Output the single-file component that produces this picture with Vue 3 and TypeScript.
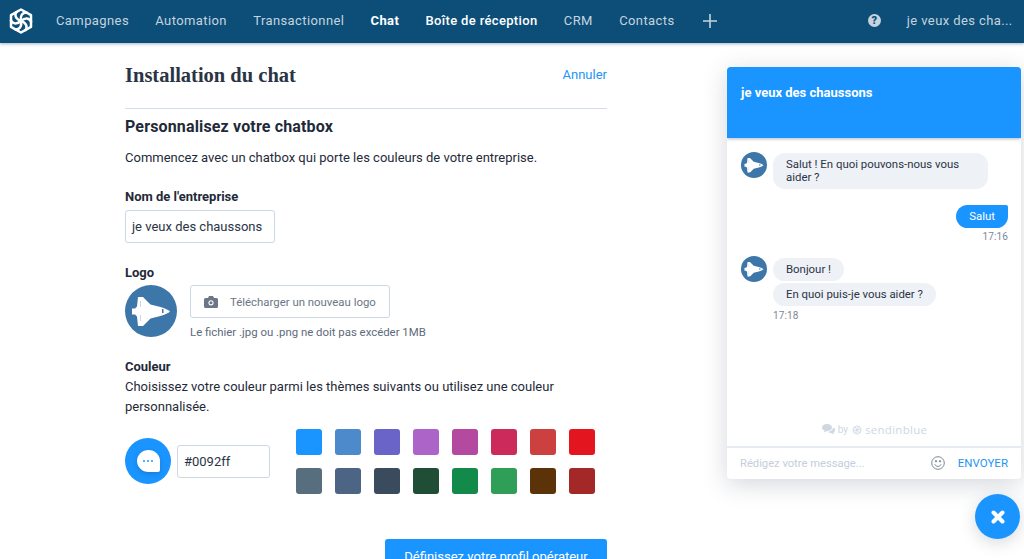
<script setup lang="ts">
const navItems: { label: string; cls: string }[] = [
  { label: 'Campagnes', cls: '' },
  { label: 'Automation', cls: '' },
  { label: 'Transactionnel', cls: '' },
  { label: 'Chat', cls: 'active' },
  { label: 'Boîte de réception', cls: 'bright' },
  { label: 'CRM', cls: '' },
  { label: 'Contacts', cls: '' },
]
const swatches: string[] = [
  '#1a94ff', '#4d8acb', '#6a64c8', '#ad64c8', '#b34a9f', '#cc2a5a', '#cc4040', '#e3161f',
  '#566e7e', '#4c6584', '#3a4b5e', '#1f4d36', '#148a4a', '#2f9e56', '#5c3208', '#a52829',
]
const arms: number[] = [0, 60, 120, 180, 240, 300]
</script>

<template>
  <div class="page">
    <svg class="defs" width="0" height="0" aria-hidden="true">
      <symbol id="shuttle" viewBox="0 0 52 52">
        <circle cx="26" cy="26" r="26" fill="#3d76a8" />
        <path fill="#fff" d="M7 23.500h3l2-2 1-9.500h5l7.500 7.500 10 2.500c4.500 1.200 8 3 9.500 4.500-1.500 1.500-5 3.300-9.500 4.500l-10 2.500-7.500 7.500h-5l-1-9.500-2-2H7z" />
        <path fill="#3d76a8" d="M37 24h1.500v4H37z" />
        <path fill="#3d76a8" opacity=".35" d="M15 16h.8v6H15zM15 30h.8v6H15z" />
      </symbol>
    </svg>

    <header class="nav">
      <svg class="brand" width="28" height="28" viewBox="0 0 28 28" fill="none" stroke="#fff" stroke-width="2.500" stroke-linejoin="round" stroke-linecap="round">
        <path d="M14 2.500l10 5.700v11.600l-10 5.700-10-5.700V8.200z" />
        <path v-for="a in arms" :key="a" d="M14 14C13 9 15 5.500 19.500 5.500" :transform="`rotate(${a} 14 14)`" />
      </svg>
      <nav class="links">
        <span v-for="item in navItems" :key="item.label" class="link" :class="item.cls">{{ item.label }}</span>
        <svg class="plus" width="14" height="14" viewBox="0 0 14 14" stroke="#c4d3df" stroke-width="1.600"><path d="M7 0v14M0 7h14" /></svg>
      </nav>
      <div class="account">
        <span class="help">?</span>
        <span class="link">je veux des cha...</span>
      </div>
    </header>

    <main class="form">
      <div class="title-row">
        <h1>Installation du chat</h1>
        <a class="cancel">Annuler</a>
      </div>
      <h2>Personnalisez votre chatbox</h2>
      <p class="intro">Commencez avec un chatbox qui porte les couleurs de votre entreprise.</p>

      <label class="label">Nom de l'entreprise</label>
      <div class="field name-field">je veux des chaussons</div>

      <label class="label logo-label">Logo</label>
      <div class="logo-row">
        <svg class="logo" width="52" height="52"><use href="#shuttle" /></svg>
        <div>
          <div class="upload">
            <svg width="14" height="12" viewBox="0 0 14 12"><path fill="#6b7686" d="M1.500 2H4l1-2h4l1 2h2.500A1.500 1.500 0 0 1 14 3.500v7a1.500 1.500 0 0 1-1.500 1.500h-11A1.500 1.500 0 0 1 0 10.500v-7A1.500 1.500 0 0 1 1.500 2z" /><circle cx="7" cy="6.800" r="2.600" fill="#fff" /><circle cx="7" cy="6.800" r="1.500" fill="#6b7686" /></svg>
            <span>Télécharger un nouveau logo</span>
          </div>
          <p class="hint">Le fichier .jpg ou .png ne doit pas excéder 1MB</p>
        </div>
      </div>

      <label class="label color-label">Couleur</label>
      <p class="color-text">Choisissez votre couleur parmi les thèmes suivants ou utilisez une couleur personnalisée.</p>
      <div class="color-row">
        <div class="preview">
          <span class="bubble"><i></i><i></i><i></i></span>
        </div>
        <div class="field hex-field">#0092ff</div>
        <div class="swatches">
          <span v-for="c in swatches" :key="c" class="swatch" :style="{ background: c }"></span>
        </div>
      </div>
      <div class="actions">
        <button class="primary" type="button">Définissez votre profil opérateur</button>
      </div>
    </main>

    <aside class="chat">
      <div class="chat-head">je veux des chaussons</div>
      <div class="chat-body">
        <div class="msg">
          <svg class="avatar" width="26" height="26"><use href="#shuttle" /></svg>
          <div class="stack">
            <div class="b in wide">Salut ! En quoi pouvons-nous vous aider ?</div>
          </div>
        </div>
        <div class="out-group">
          <div class="b out">Salut</div>
          <div class="time">17:16</div>
        </div>
        <div class="msg second">
          <svg class="avatar" width="26" height="26"><use href="#shuttle" /></svg>
          <div class="stack">
            <div class="b in">Bonjour !</div>
            <div class="b in">En quoi puis-je vous aider ?</div>
            <div class="time">17:18</div>
          </div>
        </div>
        <div class="by">
          <svg width="13" height="11" viewBox="0 0 13 11" fill="#cfd7e3"><path d="M5 0c2.800 0 5 1.500 5 3.500S7.800 7 5 7L2 8.500l.5-2C1 6 0 4.800 0 3.500 0 1.500 2.200 0 5 0z" /><path d="M11 3.500c1.300.6 2 1.500 2 2.700 0 1-.6 1.800-1.500 2.300l.4 1.800L9 9c-1.500 0-2.700-.5-3.400-1.200C8.500 7.800 11 6 11 3.500z" /></svg>
          <span>by</span>
          <svg class="by-logo" width="10" height="10" viewBox="0 0 28 28" fill="none" stroke="#cfd7e3" stroke-width="2.500"><path d="M14 2l10.500 6v12L14 26 3.500 20V8z" /><path v-for="a in arms" :key="a" d="M14 14C13 9 15 5 20 5" :transform="`rotate(${a} 14 14)`" /></svg>
          <span class="brand-name">sendinblue</span>
        </div>
      </div>
      <div class="composer">
        <span class="placeholder">Rédigez votre message...</span>
        <svg width="14" height="14" viewBox="0 0 14 14" fill="none" stroke="#7d8798" stroke-width="1"><circle cx="7" cy="7" r="6.300" /><path d="M3.800 8.300c.7 1.400 1.900 2.100 3.200 2.100s2.500-.7 3.200-2.100" /><circle cx="5" cy="5.300" r=".7" fill="#7d8798" /><circle cx="9" cy="5.300" r=".7" fill="#7d8798" /></svg>
        <span class="send">ENVOYER</span>
      </div>
    </aside>

    <button class="close" type="button" aria-label="Fermer">
      <svg width="14" height="14" viewBox="0 0 14 14" stroke="#fff" stroke-width="4" stroke-linecap="round"><path d="M2.500 2.500l9 9M11.500 2.500l-9 9" /></svg>
    </button>
  </div>
</template>

<style>
html, body { margin: 0; background: #fff; overflow: hidden; }
</style>

<style scoped>
.page {
  position: relative;
  width: 1024px;
  height: 559px;
  overflow: hidden;
  background: #fff;
  color: #1f2a3a;
  font-family: Roboto, "Liberation Sans", sans-serif;
}
.defs { position: absolute; }
.nav {
  height: 43px;
  box-sizing: border-box;
  display: flex;
  align-items: center;
  padding: 0 0 2px 7px;
  background: #0c4e78;
  box-shadow: 0 1px 3px rgba(40, 60, 90, .4);
}
.brand { flex: none; margin-right: 21px; }
.links { display: flex; align-items: center; gap: 26.300px; }
.link { font-size: 13px; letter-spacing: .4px; color: #c4d3df; white-space: nowrap; }
.link.bright { color: #fff; font-weight: 500; letter-spacing: .35px; }
.link.active { color: #fff; font-weight: 700; letter-spacing: .35px; }
.plus { margin-left: 2px; }
.account { display: flex; align-items: center; gap: 26px; margin-left: 151px; }
.help {
  width: 13px; height: 13px; border-radius: 50%;
  background: #c4d3df; color: #0c4e78;
  font-size: 11px; font-weight: 900; line-height: 13px; text-align: center;
}
.form { width: 482px; margin-left: 125px; }
.title-row {
  height: 66px;
  box-sizing: border-box;
  display: flex;
  align-items: flex-start;
  justify-content: space-between;
  padding-top: 19px;
  border-bottom: 1px solid #d5dde8;
}
h1 {
  margin: 0;
  font-family: "Liberation Serif", serif;
  font-size: 20.500px;
  line-height: 26px;
  font-weight: 700;
  color: #2a3445;
}
.cancel { font-size: 13px; line-height: 26px; color: #1f94f5; }
h2 { margin: 8px 0 0; font-size: 16px; line-height: 19px; font-weight: 700; letter-spacing: .15px; color: #1f2a3a; }
.intro { margin: 12px 0 0; font-size: 13px; line-height: 19px; }
.label { display: block; font-size: 13px; line-height: 16px; font-weight: 700; }
.intro + .label { margin-top: 22px; }
.field {
  box-sizing: border-box;
  height: 33px;
  border: 1px solid #ccd6e4;
  border-radius: 3px;
  padding: 0 6px;
  font-size: 13px;
  line-height: 31px;
  white-space: nowrap;
  color: #2a3445;
}
.name-field { width: 150px; margin-top: 5px; }
.logo-label { margin-top: 22px; }
.logo-row { display: flex; gap: 13px; margin-top: 4px; height: 52px; }
.logo { flex: none; }
.upload {
  box-sizing: border-box;
  width: 200px;
  height: 33px;
  border: 1px solid #ccd6e4;
  border-radius: 3px;
  display: flex;
  align-items: center;
  gap: 12px;
  padding-left: 13px;
  font-size: 11.400px;
  white-space: nowrap;
  color: #6b7686;
}
.hint { margin: 7px 0 0; font-size: 11.400px; line-height: 15px; white-space: nowrap; color: #5e6a7b; }
.color-label { margin-top: 22px; }
.color-text { margin: 2px 0 0; font-size: 13px; line-height: 20px; width: 460px; }
.color-row { display: flex; align-items: center; margin-top: 11px; height: 66px; }
.preview {
  flex: none;
  width: 46px; height: 46px;
  border-radius: 50%;
  background: #1a94ff;
  display: flex; align-items: center; justify-content: center;
}
.bubble {
  width: 23px; height: 22px;
  background: #fff;
  border-radius: 50% 50% 2px 50%;
  box-shadow: 0 2px 4px rgba(20, 60, 110, .25);
  display: flex; align-items: center; justify-content: center; gap: 2px;
}
.bubble i { width: 2px; height: 2px; border-radius: 50%; background: #1a94ff; }
.hex-field { width: 93px; margin-left: 6px; }
.swatches {
  display: grid;
  grid-template-columns: repeat(8, 26px);
  grid-auto-rows: 26px;
  gap: 13px;
  margin-left: 26px;
}
.swatch { border-radius: 3px; }
.actions { display: flex; justify-content: flex-end; margin-top: 45px; }
.primary {
  width: 222px; height: 34px;
  border: 0; border-radius: 3px;
  background: #1a94ff; color: #fff;
  font: 13px Roboto, "Liberation Sans", sans-serif;
}
.chat {
  position: absolute;
  left: 727px; top: 67px;
  width: 294px; height: 412px;
  display: flex; flex-direction: column;
  border-radius: 4px;
  background: #fff;
  box-shadow: 0 5px 24px rgba(60, 70, 90, .22);
  overflow: hidden;
}
.chat-head {
  height: 71px;
  flex: none;
  box-sizing: border-box;
  padding: 18px 14px 0;
  background: #1a94ff;
  color: #fff;
  font-size: 13px;
  line-height: 15px;
  font-weight: 700;
  box-shadow: 0 1px 3px rgba(40, 60, 90, .35);
}
.chat-body {
  flex: 1;
  display: flex; flex-direction: column;
  padding: 14px 13px 0 14px;
  font-size: 11.400px;
  line-height: 13px;
  color: #2a3445;
}
.msg { display: flex; gap: 6px; }
.msg.second { margin-top: 13px; }
.avatar { flex: none; }
.stack { display: flex; flex-direction: column; align-items: flex-start; gap: 2px; padding-top: 1px; }
.second .stack { padding-top: 2px; }
.b { padding: 5px 13px; border-radius: 12px; }
.b.in { background: #eef1f6; }
.b.in.wide { width: 215px; box-sizing: border-box; }
.out-group { display: flex; flex-direction: column; align-items: flex-end; margin-top: 16px; }
.b.out { background: #1a94ff; color: #fff; padding: 5px 13px; border-top-right-radius: 2px; }
.time { font-size: 10px; line-height: 12px; letter-spacing: .1px; color: #7d8798; margin-top: 2px; }
.out-group .time { margin-top: 3px; }
.by {
  margin-top: auto;
  margin-bottom: 10px;
  display: flex; align-items: center; justify-content: center; gap: 3px;
  font-size: 10px;
  color: #cfd7e3;
}
.by-logo { margin-left: 1px; }
.brand-name { font-size: 11.500px; letter-spacing: .3px; font-family: "Open Sans", sans-serif; }
.composer {
  flex: none;
  height: 33px;
  box-sizing: border-box;
  border-top: 2px solid #e6eaf1;
  display: flex; align-items: center;
  padding: 0 13px 1px;
  font-size: 11.200px;
}
.placeholder { flex: 1; color: #c5cedb; }
.send { margin-left: 13px; color: #1f94f5; font-size: 11.500px; }
.close {
  position: absolute;
  left: 975px; top: 494px;
  width: 45px; height: 45px;
  padding: 0; border: 0; border-radius: 50%;
  background: #1a94ff;
  display: flex; align-items: center; justify-content: center;
  box-shadow: 0 4px 16px rgba(60, 70, 90, .2);
}
</style>
